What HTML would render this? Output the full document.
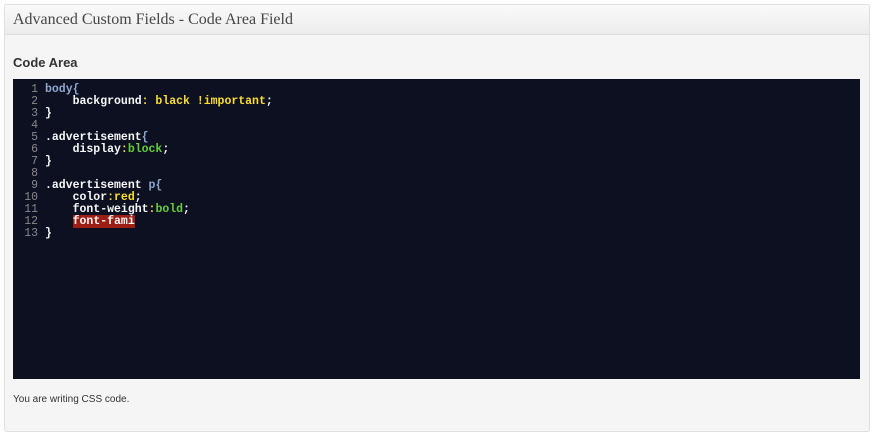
<!DOCTYPE html>
<html><head><style>
body{margin:0;background:#fff;width:874px;height:435px;position:relative;font-family:"Liberation Sans",sans-serif;}
.box{position:absolute;left:4px;top:4px;width:864px;height:426px;border:1px solid #dfdfdf;border-radius:3px;background:#f5f5f5;overflow:hidden}
.hd{height:29px;border-bottom:1px solid #dfdfdf;background:linear-gradient(#fafafa,#ececec);font-family:"Liberation Serif",serif;font-size:16px;color:#464646;line-height:29px;padding-left:8px}
.lbl{position:absolute;left:8px;top:50px;font-size:13px;font-weight:bold;color:#333}
.code{position:absolute;left:8px;top:74px;width:847px;height:300px;background:#0c1021;font-family:"Liberation Mono",monospace;font-size:11.5px;line-height:12px;color:#f8f8f8;padding-top:5px;box-sizing:border-box;font-weight:bold}
.ln{position:absolute;left:0;width:25px;text-align:right;color:#888;font-weight:normal}
.tx{position:absolute;left:32px;white-space:pre}
.b{color:#8da6ce}.y{color:#fbde2d}.g{color:#61ce3c}.e{background:#9d1e15}
.note{position:absolute;left:8px;top:389px;font-size:10px;color:#333}
</style></head><body>
<div class="box">
<div class="hd">Advanced Custom Fields - Code Area Field</div>
<div class="lbl">Code Area</div>
<div class="code">
<div style="position:relative">
<div class="ln" style="top:0">1</div><div class="tx" style="top:0"><span class="b">body{</span></div>
<div class="ln" style="top:12px">2</div><div class="tx" style="top:12px">    background<span class="y">: black !important</span>;</div>
<div class="ln" style="top:24px">3</div><div class="tx" style="top:24px">}</div>
<div class="ln" style="top:36px">4</div>
<div class="ln" style="top:48px">5</div><div class="tx" style="top:48px">.advertisement<span class="b">{</span></div>
<div class="ln" style="top:60px">6</div><div class="tx" style="top:60px">    display<span class="y">:</span><span class="g">block</span>;</div>
<div class="ln" style="top:72px">7</div><div class="tx" style="top:72px">}</div>
<div class="ln" style="top:84px">8</div>
<div class="ln" style="top:96px">9</div><div class="tx" style="top:96px">.advertisement <span class="b">p{</span></div>
<div class="ln" style="top:108px">10</div><div class="tx" style="top:108px">    color<span class="y">:red</span>;</div>
<div class="ln" style="top:120px">11</div><div class="tx" style="top:120px">    font-weight<span class="y">:</span><span class="g">bold</span>;</div>
<div class="ln" style="top:132px">12</div><div class="tx" style="top:132px">    <span class="e">font-fami</span></div>
<div class="ln" style="top:144px">13</div><div class="tx" style="top:144px">}</div>
</div></div>
<div class="note">You are writing CSS code.</div>
</div>
</body></html>
